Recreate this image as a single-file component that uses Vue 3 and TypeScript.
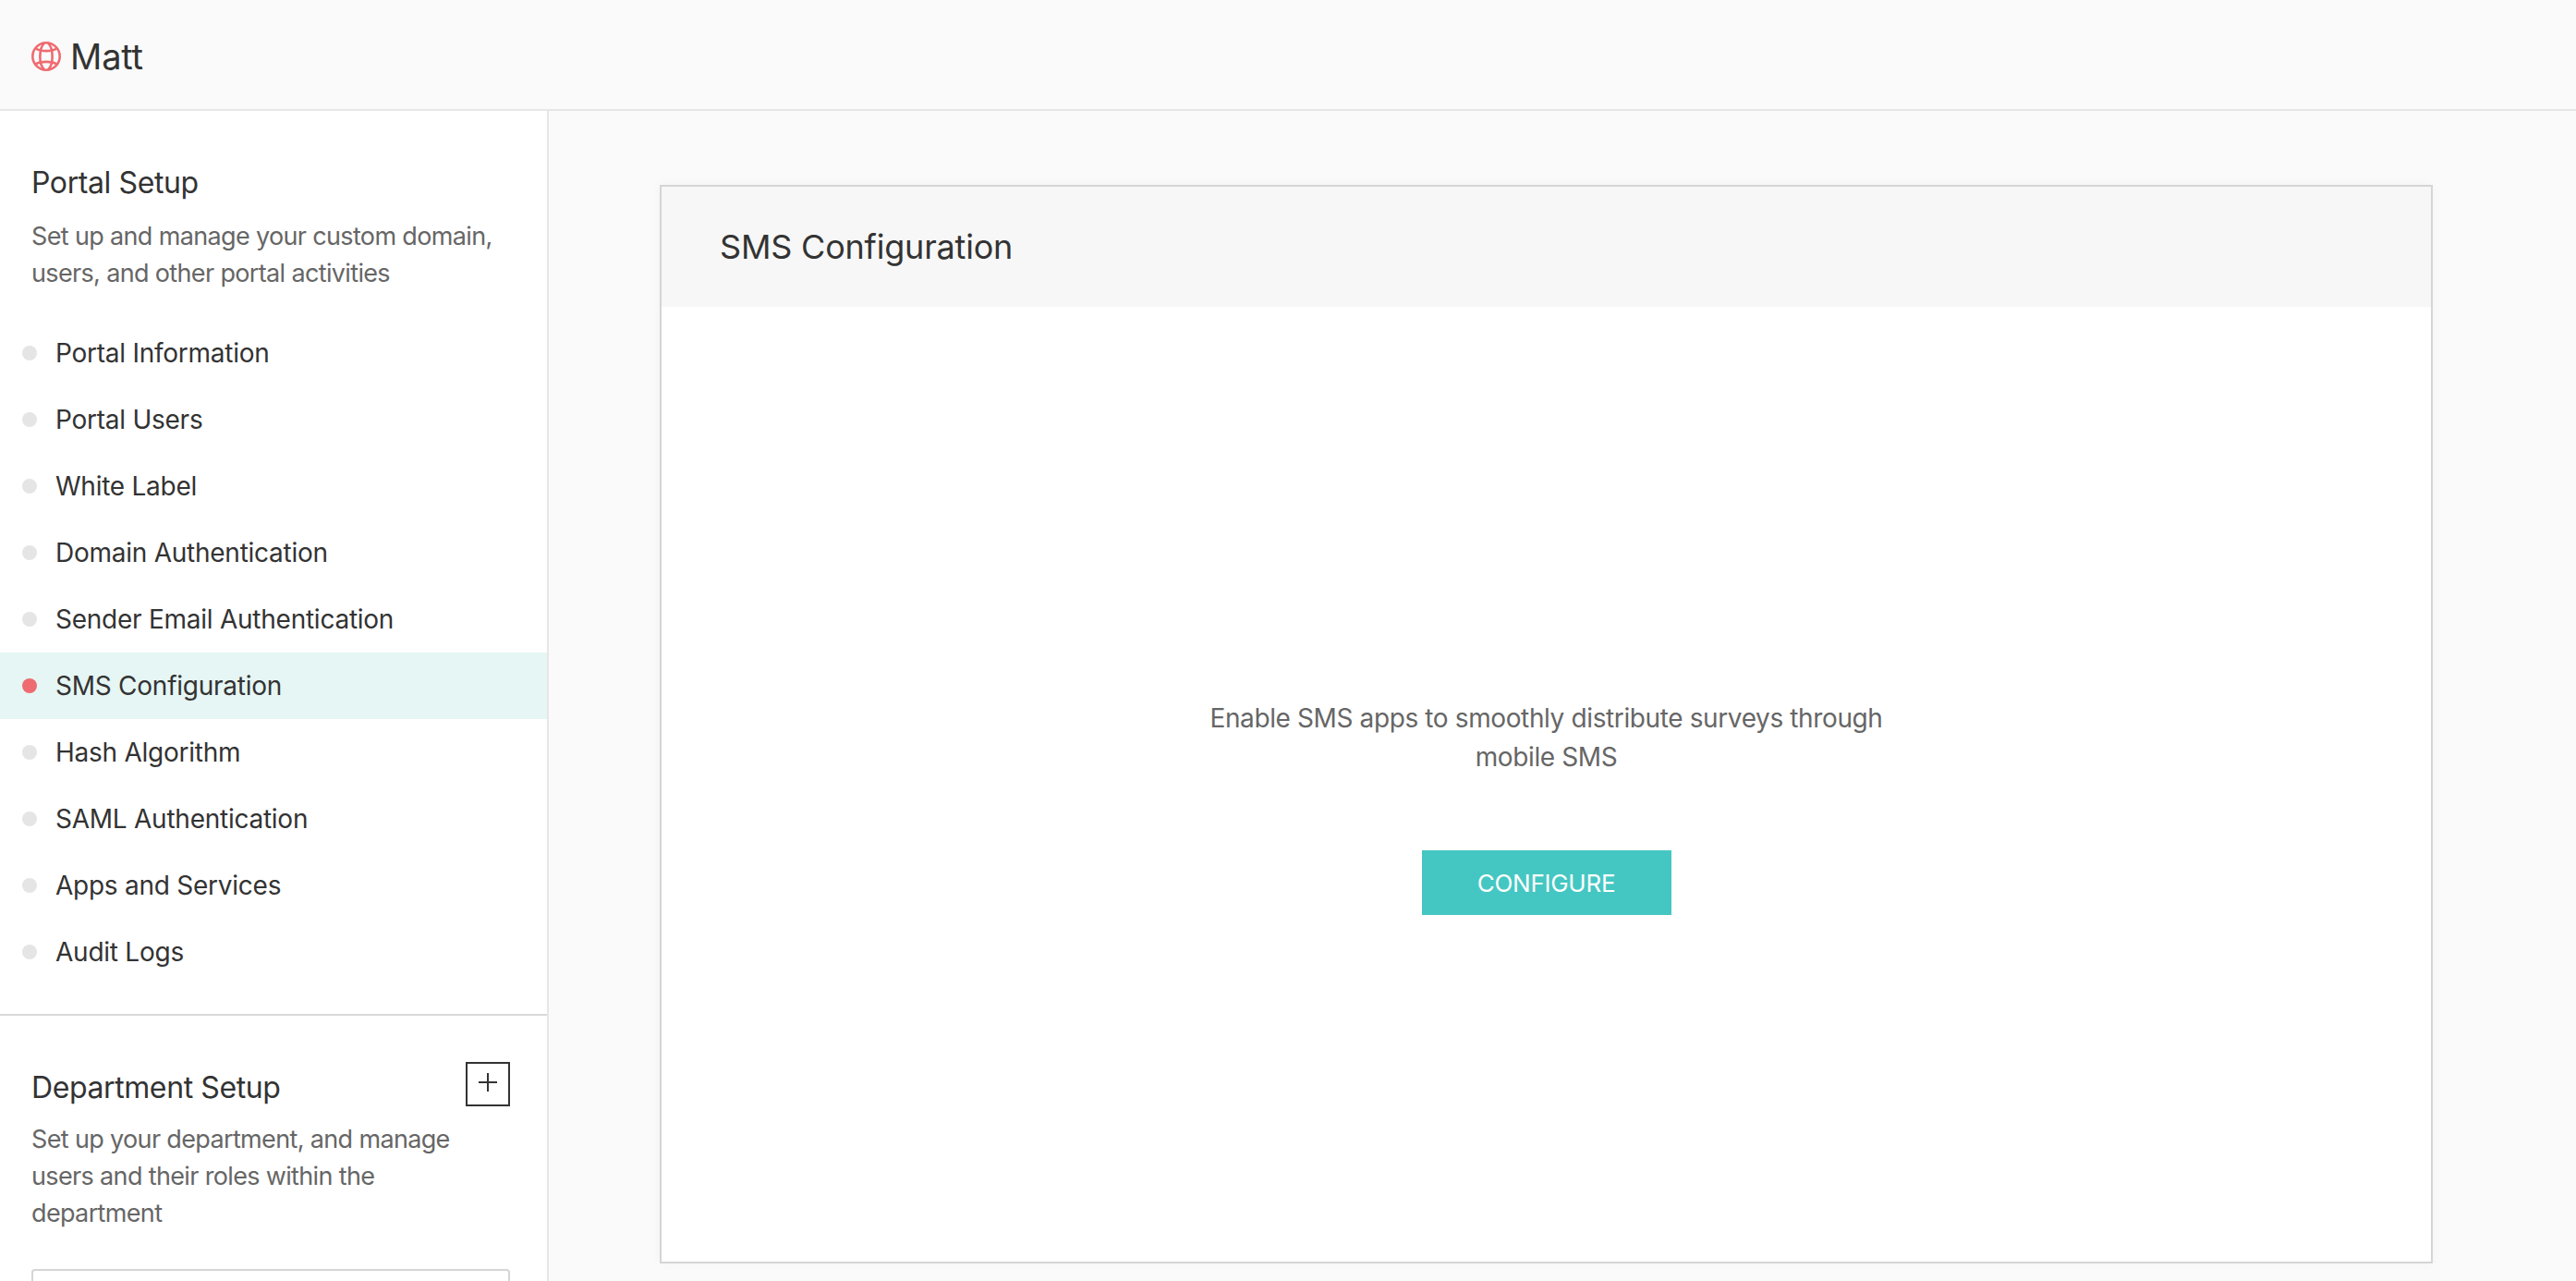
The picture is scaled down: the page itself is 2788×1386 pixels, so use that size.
<script setup lang="ts">
const portalItems = [
  "Portal Information",
  "Portal Users",
  "White Label",
  "Domain Authentication",
  "Sender Email Authentication",
  "SMS Configuration",
  "Hash Algorithm",
  "SAML Authentication",
  "Apps and Services",
  "Audit Logs",
];
const activeItem = "SMS Configuration";
</script>

<template>
  <div class="page">
    <header class="topbar">
      <svg class="globe" viewBox="0 0 32 32" fill="none" stroke="#ee6b70" stroke-width="2.6">
        <circle cx="16" cy="16" r="14.7" />
        <path d="M14 1.6C8 7 7.6 25 14 30.4" />
        <path d="M18 1.6C24 7 24.4 25 18 30.4" />
        <path d="M4.5 7.5C10 11 22 11 27.5 7.5" />
        <path d="M4.5 24.5C10 21 22 21 27.5 24.5" />
      </svg>
      <span class="portal-name">Matt</span>
    </header>

    <div class="body">
      <aside class="sidebar">
        <section class="setup">
          <h2 class="setup-title">Portal Setup</h2>
          <p class="setup-desc">Set up and manage your custom domain, users, and other portal activities</p>
          <ul class="nav">
            <li v-for="item in portalItems" :key="item" class="nav-item" :class="{ active: item === activeItem }">
              <span class="dot" />
              {{ item }}
            </li>
          </ul>
        </section>
        <section class="dept">
          <div class="dept-head">
            <h2 class="setup-title">Department Setup</h2>
            <button class="add-btn" type="button">
              <svg viewBox="0 0 20 20" width="20" height="20" stroke="#333" stroke-width="2">
                <path d="M10 0V20M0 10H20" />
              </svg>
            </button>
          </div>
          <p class="setup-desc dept-desc">Set up your department, and manage users and their roles within the department</p>
          <div class="dept-search" />
        </section>
      </aside>

      <main class="main">
        <div class="card">
          <div class="card-head">SMS Configuration</div>
          <div class="card-body">
            <p class="empty-text">Enable SMS apps to smoothly distribute surveys through mobile SMS</p>
            <button class="configure" type="button">CONFIGURE</button>
          </div>
        </div>
      </main>
    </div>
  </div>
</template>

<style>
html,
body {
  margin: 0;
  overflow: hidden;
}
</style>

<style scoped>
* {
  box-sizing: border-box;
}

.page {
  display: flex;
  flex-direction: column;
  height: 100vh;
  background: #fafafa;
  color: #333;
  font-family: Inter, "Liberation Sans", sans-serif;
  overflow: hidden;
}

.topbar {
  display: flex;
  flex: none;
  align-items: center;
  gap: 10px;
  height: 120px;
  padding: 4px 34px 0;
  border-bottom: 2px solid #e6e6e6;
}

.globe {
  width: 32px;
  height: 32px;
}

.portal-name {
  font-size: 38px;
  letter-spacing: -0.2px;
}

.body {
  display: flex;
  flex: 1;
  min-height: 0;
}

.sidebar {
  flex: none;
  width: 594px;
  background: #fff;
  border-right: 2px solid #e6e6e6;
  overflow: hidden;
}

.setup {
  padding-top: 54px;
  border-bottom: 2px solid #d9d9d9;
  padding-bottom: 31px;
}

.setup-title {
  margin: 0;
  padding-left: 34px;
  font-size: 32px;
  line-height: 48px;
  font-weight: 400;
  letter-spacing: -0.4px;
}

.setup-desc {
  margin: 0;
  padding: 0 34px;
  font-size: 27px;
  line-height: 40px;
  color: #666;
  letter-spacing: -0.65px;
}

.setup > .setup-desc {
  margin-top: 14px;
}

.nav {
  list-style: none;
  margin: 30px 0 0;
  padding: 0;
}

.nav-item {
  display: flex;
  align-items: center;
  gap: 20px;
  height: 72px;
  padding-left: 24px;
  font-size: 28px;
  letter-spacing: -0.25px;
}

.nav-item.active {
  background: #e6f6f4;
}

.dot {
  width: 16px;
  height: 16px;
  border-radius: 50%;
  background: #e5e5e5;
}

.active .dot {
  background: #ee6b70;
}

.dept {
  padding-top: 50px;
}

.dept-head {
  display: flex;
  justify-content: space-between;
  align-items: flex-start;
  padding-right: 40px;
}

.dept-head .setup-title {
  margin-top: 4px;
}

.add-btn {
  display: flex;
  align-items: center;
  justify-content: center;
  width: 48px;
  height: 48px;
  padding: 0 0 4px;
  background: #fff;
  border: 2px solid #333;
}

.dept-desc {
  margin-top: 12px;
  padding-right: 40px;
}

.dept-search {
  height: 60px;
  margin: 40px 40px 0 34px;
  border: 2px solid #d5d5d5;
  border-radius: 4px;
}

.main {
  flex: 1;
  display: flex;
  min-width: 0;
  padding: 80px 155px 19px 120px;
}

.card {
  flex: 1;
  display: flex;
  flex-direction: column;
  background: #fff;
  border: 2px solid #d5d5d5;
  box-shadow: 0 0 12px rgba(0, 0, 0, 0.03);
}

.card-head {
  display: flex;
  align-items: center;
  height: 130px;
  padding: 0 63px;
  background: #f7f7f7;
  font-size: 36px;
  letter-spacing: -0.2px;
}

.card-body {
  display: flex;
  flex-direction: column;
  align-items: center;
  padding-top: 424px;
}

.empty-text {
  width: 780px;
  margin: 0;
  font-size: 28px;
  line-height: 42px;
  color: #666;
  text-align: center;
  letter-spacing: -0.38px;
}

.configure {
  width: 270px;
  height: 70px;
  margin-top: 80px;
  padding: 0;
  border: 0;
  background: #44c7c2;
  color: #fff;
  font-family: inherit;
  font-size: 26px;
  letter-spacing: -0.25px;
}
</style>
